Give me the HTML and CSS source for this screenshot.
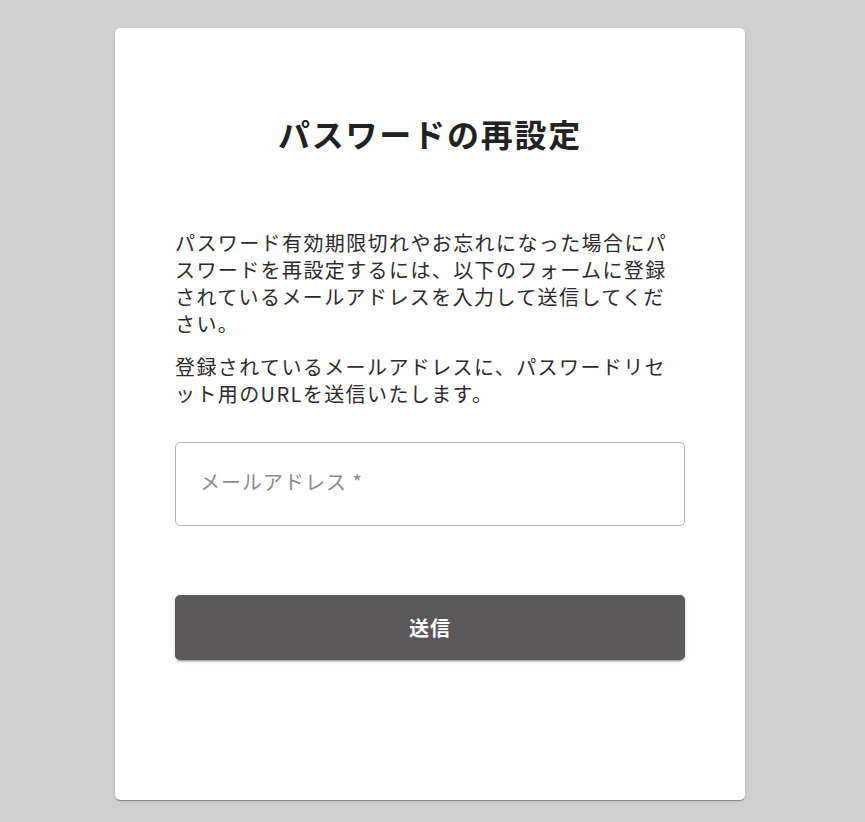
FILE: index.html
```html
<!DOCTYPE html>
<html lang="ja">
<head>
<meta charset="utf-8">
<title>パスワードの再設定</title>
<link rel="stylesheet" href="styles.css">
</head>
<body>
<div class="page">
  <main class="card">
    <h1 class="title">パスワードの再設定</h1>
    <p class="text">パスワード有効期限切れやお忘れになった場合にパスワードを再設定するには、以下のフォームに登録されているメールアドレスを入力して送信してください。</p>
    <p class="text">登録されているメールアドレスに、パスワードリセット用のURLを送信いたします。</p>
    <form class="form">
      <div class="field">
        <input class="input" type="email" placeholder="メールアドレス *">
      </div>
      <button class="button" type="button">送信</button>
    </form>
  </main>
</div>
</body>
</html>
```

FILE: styles.css
```css
html, body {
  margin: 0;
  padding: 0;
  background: #d0d0d0;
  font-family: "Noto Sans CJK JP", "Noto Sans", sans-serif;
}

.page {
  padding: 28px 0 22px 115px;
}

.card {
  width: 630px;
  box-sizing: border-box;
  background: #fff;
  border-radius: 5px;
  box-shadow: 0 2px 1px -1px rgba(0,0,0,0.2), 0 1px 1px 0 rgba(0,0,0,0.14), 0 1px 3px 0 rgba(0,0,0,0.12);
  padding: 85px 60px 140px;
}

.title {
  margin: 0 0 76px;
  text-align: center;
  font-size: 32px;
  line-height: 40px;
  font-weight: 700;
  letter-spacing: 1.8px;
  color: #222;
}

.text {
  margin: 0 0 16px;
  font-size: 20px;
  line-height: 27px;
  letter-spacing: 1.4px;
  color: #2b2b2b;
}

.form {
  margin-top: 35px;
  display: flex;
  flex-direction: column;
  gap: 69px;
}

.field {
  display: flex;
}

.input {
  flex: 1;
  height: 84px;
  box-sizing: border-box;
  border: 1px solid #b4b4b4;
  border-radius: 5px;
  padding: 0 24px 5px;
  font-family: inherit;
  font-size: 20px;
  letter-spacing: 1px;
  color: #222;
  outline: none;
}

.input::placeholder {
  color: #8a8a8a;
}

.button {
  height: 65px;
  border: none;
  border-radius: 5px;
  background: #5a5858;
  color: #fff;
  font-family: inherit;
  font-size: 20px;
  font-weight: 700;
  letter-spacing: 1px;
  box-shadow: 0 3px 1px -2px rgba(0,0,0,0.2), 0 2px 2px 0 rgba(0,0,0,0.14), 0 1px 5px 0 rgba(0,0,0,0.12);
  cursor: pointer;
}
```
